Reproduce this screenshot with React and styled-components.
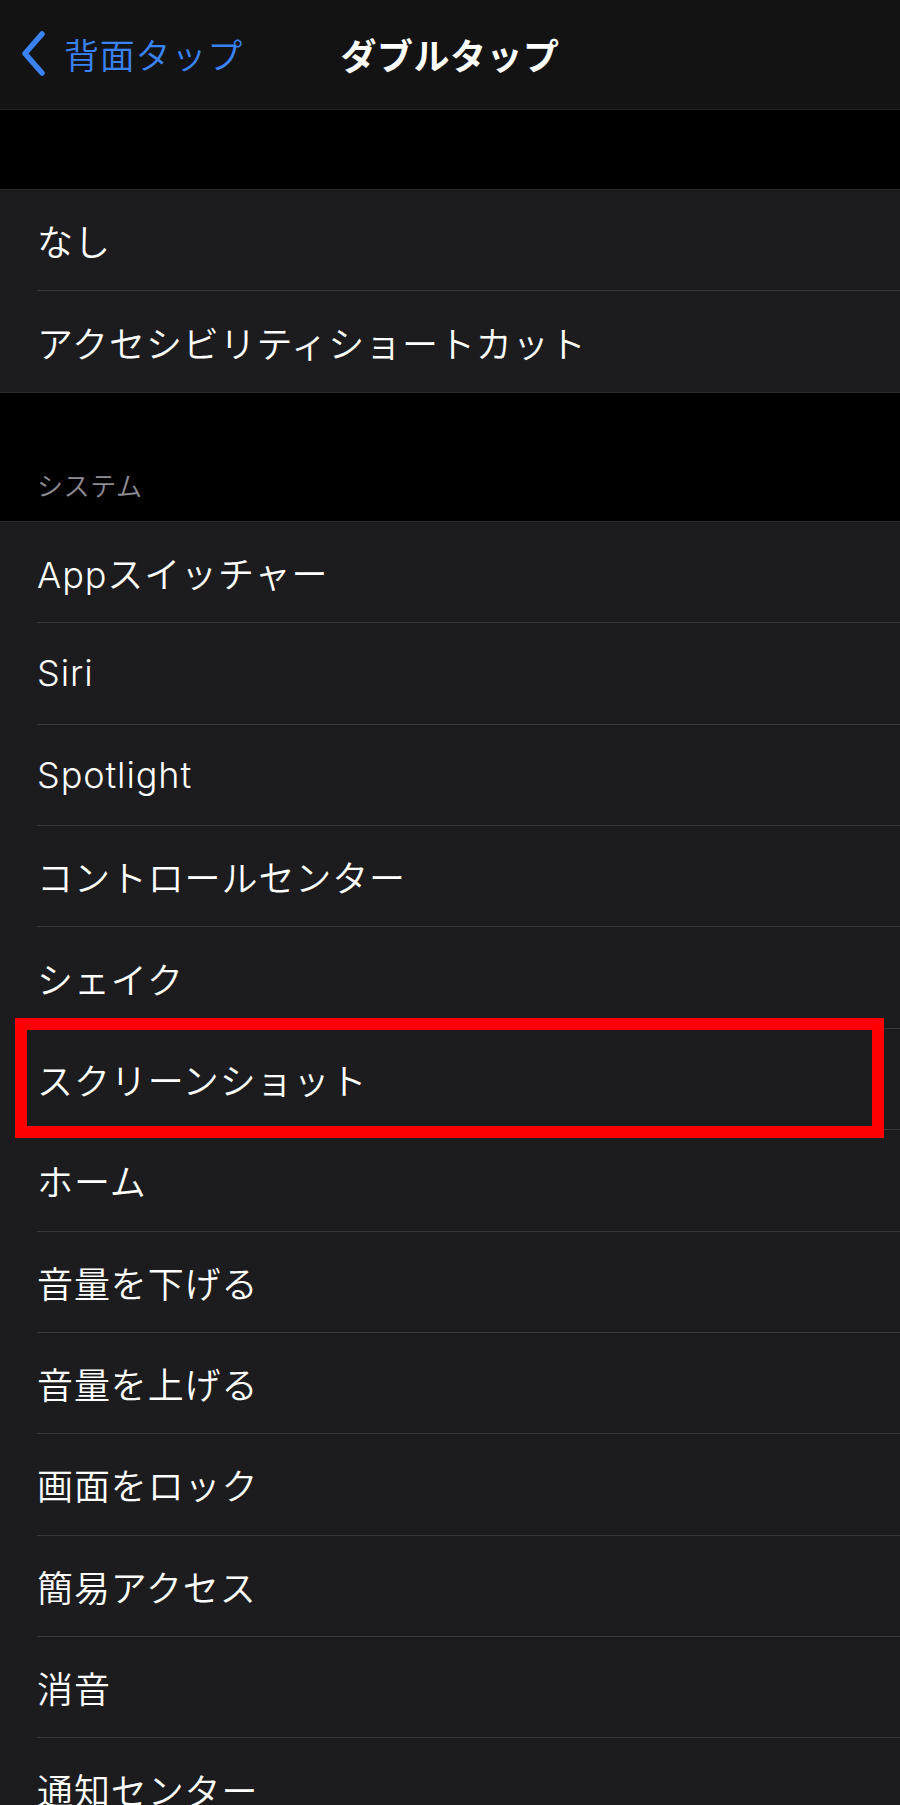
import React from 'react';
import styled, { createGlobalStyle } from 'styled-components';

const GlobalStyle = createGlobalStyle`
  html, body {
    margin: 0;
    padding: 0;
    background: #000000;
    font-family: 'Inter', 'Noto Sans CJK JP', sans-serif;
    color: #ffffff;
  }
`;

const Page = styled.div`
  width: 900px;
  background: #000000;
`;

const NavBar = styled.header`
  height: 110px;
  box-sizing: border-box;
  background: #131313;
  border-bottom: 1px solid #1e1e1e;
  display: grid;
  grid-template-columns: 1fr auto 1fr;
  align-items: center;
  padding: 0 0 0 20px;
`;

const BackButton = styled.div`
  display: flex;
  align-items: center;
  gap: 17px;
  color: #3a82f6;
  font-size: 35px;
  font-family: 'Noto Sans CJK JP', sans-serif;
  font-weight: 350;
  letter-spacing: 0.8px;
  margin-top: -2px;
`;

const Title = styled.h1`
  margin: -2px 0 0 -20px;
  font-size: 36px;
  font-weight: 600;
  font-family: 'Noto Sans CJK JP', sans-serif;
  color: #ffffff;
  letter-spacing: 0.5px;
`;

const Spacer = styled.div`
  height: ${(p) => p.$h}px;
`;

const SectionLabel = styled.div`
  height: 128px;
  box-sizing: border-box;
  display: flex;
  align-items: flex-end;
  padding: 0 0 18px 37px;
  font-size: 26px;
  font-weight: 350;
  letter-spacing: 0.6px;
  color: #8d8d93;
  font-family: 'Noto Sans CJK JP', sans-serif;
`;

const Group = styled.section`
  background: #1c1c1e;
  border-top: 1px solid #2a2a2c;
  border-bottom: 1px solid #2a2a2c;
`;

const Row = styled.div`
  position: relative;
  padding-left: 37px;
`;

const RowInner = styled.div`
  height: ${(p) => (p.$last ? 100.4 : 101.4)}px;
  box-sizing: border-box;
  display: flex;
  align-items: center;
  font-size: 36px;
  font-weight: 350;
  letter-spacing: 0.9px;
  border-bottom: ${(p) => (p.$last ? 'none' : '1px solid #38383a')};
`;

const Highlight = styled.div`
  position: absolute;
  top: -11px;
  bottom: -8px;
  left: 15px;
  right: 16px;
  border: 12px solid #ff0000;
  pointer-events: none;
`;

const Chevron = () => (
  <svg width="27" height="45" viewBox="0 0 27 45">
    <path
      d="M22 3 L5 22.5 L22 42"
      fill="none"
      stroke="#3a82f6"
      strokeWidth="5.5"
      strokeLinecap="round"
      strokeLinejoin="round"
    />
  </svg>
);

const topItems = ['なし', 'アクセシビリティショートカット'];

const systemItems = [
  'Appスイッチャー',
  'Siri',
  'Spotlight',
  'コントロールセンター',
  'シェイク',
  'スクリーンショット',
  'ホーム',
  '音量を下げる',
  '音量を上げる',
  '画面をロック',
  '簡易アクセス',
  '消音',
  '通知センター',
];

const App = () => {
  return (
    <>
      <GlobalStyle />
      <Page>
        <NavBar>
          <BackButton>
            <Chevron />
            <span>背面タップ</span>
          </BackButton>
          <Title>ダブルタップ</Title>
          <div />
        </NavBar>
        <Spacer $h={79} />
        <Group>
          {topItems.map((item, i) => (
            <Row key={item}>
              <RowInner $last={i === topItems.length - 1}>{item}</RowInner>
            </Row>
          ))}
        </Group>
        <SectionLabel>システム</SectionLabel>
        <Group>
          {systemItems.map((item, i) => (
            <Row key={item}>
              <RowInner $last={i === systemItems.length - 1}>{item}</RowInner>
              {item === 'スクリーンショット' && <Highlight />}
            </Row>
          ))}
        </Group>
      </Page>
    </>
  );
};

export default App;
